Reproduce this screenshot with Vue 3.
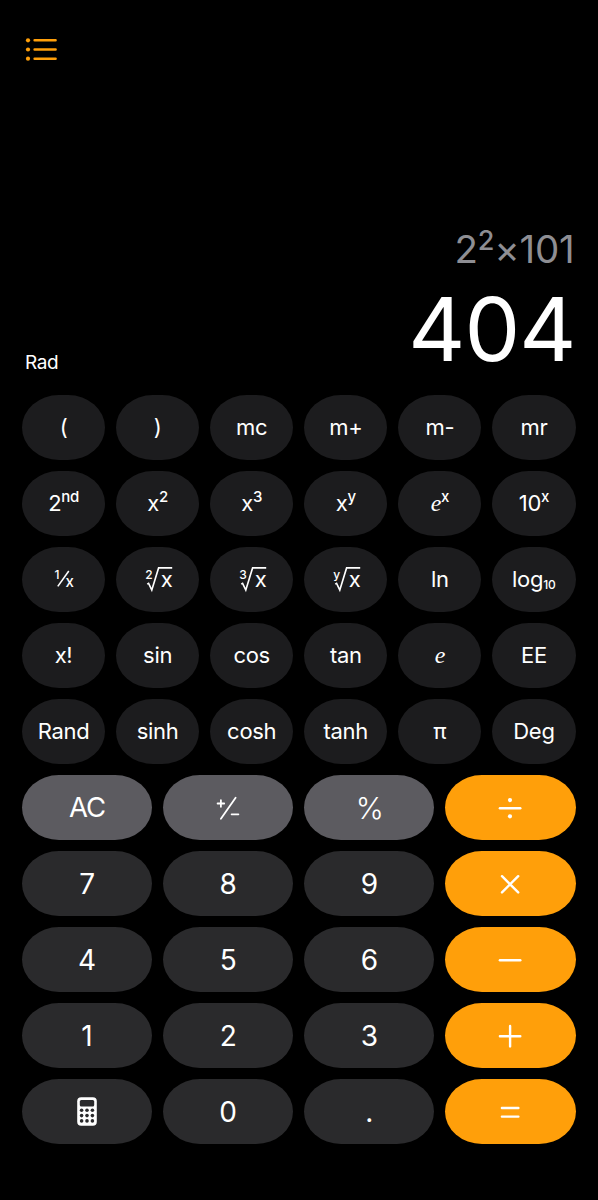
<template>
  <div class="calculator">
    <header class="top-bar">
      <button class="history-button" aria-label="History">
        <svg width="32" height="24" viewBox="0 0 32 24">
          <g fill="#ff9f0a">
            <circle cx="3" cy="3.3" r="2.1" />
            <circle cx="3" cy="12.5" r="2.1" />
            <circle cx="3" cy="21.7" r="2.1" />
          </g>
          <path
            d="M9.6 3.3H30.6M9.6 12.5H30.6M9.6 21.7H30.6"
            stroke="#ff9f0a"
            stroke-width="2.5"
            stroke-linecap="round"
          />
        </svg>
      </button>
    </header>

    <section class="display">
      <div class="expression">2<sup class="exponent">2</sup><span class="times">×</span>101</div>
      <div class="result-row">
        <span class="angle-mode">Rad</span>
        <span class="result">404</span>
      </div>
    </section>

    <section class="keys scientific">
      <button v-for="key in scientificKeys" :key="key.id" class="key key-function">
        <svg v-if="key.root" class="glyph" width="32" height="32" viewBox="0 0 32 32">
          <text class="glyph-index" x="3.2" y="16">{{ key.root }}</text>
          <path class="stroke" d="M5.2 21.1L6.6 20.3L9.8 27.1L16.6 4.9H30.2" />
          <text class="glyph-x" x="18.7" y="23.6">x</text>
        </svg>
        <svg v-else-if="key.reciprocal" class="glyph" width="32" height="32" viewBox="0 0 32 32">
          <text class="glyph-index" x="6.6" y="16">1</text>
          <path class="stroke" d="M9.8 23.4L20.8 8" />
          <text class="glyph-denominator" x="17.4" y="23.8">x</text>
        </svg>
        <span v-else class="label">
          <i v-if="key.euler" class="euler">e</i>{{ key.label
          }}<sup v-if="key.sup" class="sup">{{ key.sup }}</sup
          ><sub v-if="key.sub" class="sub">{{ key.sub }}</sub>
        </span>
      </button>
    </section>

    <section class="keys basic">
      <button v-for="key in basicKeys" :key="key.id" class="key" :class="'key-' + key.type">
        <svg v-if="key.icon === 'calculator'" width="20" height="29" viewBox="0 0 20 29">
          <rect x="0.2" y="0.3" width="19.6" height="28.4" rx="4" fill="#fff" />
          <rect x="2.8" y="3" width="14.4" height="6.4" rx="1.5" fill="#2a2a2c" />
          <g fill="#2a2a2c">
            <template v-for="y in [13.3, 18.6, 23.9]" :key="y">
              <circle v-for="x in [4.6, 10, 15.4]" :key="x" :cx="x" :cy="y" r="1.8" />
            </template>
          </g>
        </svg>
        <svg v-else-if="key.icon" class="glyph" width="32" height="32" viewBox="0 0 32 32">
          <path :class="key.icon === 'sign' ? 'sign' : 'operator'" :d="icons[key.icon]" />
          <template v-if="key.icon === 'divide'">
            <circle cx="16" cy="8.1" r="2.1" fill="#fff" />
            <circle cx="16" cy="24.3" r="2.1" fill="#fff" />
          </template>
        </svg>
        <span v-else class="label" :class="{ percent: key.label === '%' }">{{ key.label }}</span>
      </button>
    </section>
  </div>
</template>

<script setup>
const scientificKeys = [
  { id: 'open', label: '(' },
  { id: 'close', label: ')' },
  { id: 'mc', label: 'mc' },
  { id: 'm+', label: 'm+' },
  { id: 'm-', label: 'm-' },
  { id: 'mr', label: 'mr' },
  { id: '2nd', label: '2', sup: 'nd' },
  { id: 'square', label: 'x', sup: '2' },
  { id: 'cube', label: 'x', sup: '3' },
  { id: 'power', label: 'x', sup: 'y' },
  { id: 'exp', euler: true, sup: 'x' },
  { id: 'exp10', label: '10', sup: 'x' },
  { id: 'reciprocal', reciprocal: true },
  { id: 'root2', root: '2' },
  { id: 'root3', root: '3' },
  { id: 'rooty', root: 'y' },
  { id: 'ln', label: 'ln' },
  { id: 'log10', label: 'log', sub: '10' },
  { id: 'factorial', label: 'x!' },
  { id: 'sin', label: 'sin' },
  { id: 'cos', label: 'cos' },
  { id: 'tan', label: 'tan' },
  { id: 'e', euler: true },
  { id: 'ee', label: 'EE' },
  { id: 'rand', label: 'Rand' },
  { id: 'sinh', label: 'sinh' },
  { id: 'cosh', label: 'cosh' },
  { id: 'tanh', label: 'tanh' },
  { id: 'pi', label: 'π' },
  { id: 'deg', label: 'Deg' },
]

const basicKeys = [
  { id: 'ac', label: 'AC', type: 'utility' },
  { id: 'sign', icon: 'sign', type: 'utility' },
  { id: 'percent', label: '%', type: 'utility' },
  { id: 'divide', icon: 'divide', type: 'operator' },
  { id: '7', label: '7', type: 'digit' },
  { id: '8', label: '8', type: 'digit' },
  { id: '9', label: '9', type: 'digit' },
  { id: 'multiply', icon: 'multiply', type: 'operator' },
  { id: '4', label: '4', type: 'digit' },
  { id: '5', label: '5', type: 'digit' },
  { id: '6', label: '6', type: 'digit' },
  { id: 'minus', icon: 'minus', type: 'operator' },
  { id: '1', label: '1', type: 'digit' },
  { id: '2', label: '2', type: 'digit' },
  { id: '3', label: '3', type: 'digit' },
  { id: 'plus', icon: 'plus', type: 'operator' },
  { id: 'mode', icon: 'calculator', type: 'digit' },
  { id: '0', label: '0', type: 'digit' },
  { id: 'dot', label: '.', type: 'digit' },
  { id: 'equals', icon: 'equals', type: 'operator' },
]

const icons = {
  sign: 'M5.6 11.5H12.2M8.9 8.2V14.8M8.9 26.7L23.6 5.8M19.6 22.3H26.4',
  divide: 'M5.9 16.2H26.3',
  multiply: 'M8 8.2L24.2 24.4M24.2 8.2L8 24.4',
  minus: 'M5.9 16.2H26.3',
  plus: 'M5.9 16.2H26.3M16.1 6V26.4',
  equals: 'M7.9 12H24.4M7.9 20.6H24.4',
}
</script>

<style>
body {
  background: #000;
}
</style>

<style scoped>
.calculator {
  box-sizing: border-box;
  width: 598px;
  height: 1200px;
  padding: 37px 22.5px 0 22px;
  display: flex;
  flex-direction: column;
  background: #000;
  color: #fff;
  font-family: Inter, 'Liberation Sans', sans-serif;
}

button {
  border: none;
  padding: 0;
  margin: 0;
  background: none;
  color: inherit;
  font: inherit;
  cursor: pointer;
}

.top-bar {
  height: 189px;
  padding-left: 3px;
}

.history-button {
  display: block;
  height: 24px;
}

.history-button svg {
  display: block;
}

.display {
  height: 168.6px;
}

.expression {
  height: 48px;
  padding-right: 1px;
  text-align: right;
  font-size: 38.5px;
  line-height: 47px;
  letter-spacing: -0.2px;
  color: #8e8e93;
}

.exponent {
  font-size: 27px;
  font-weight: 500;
  line-height: 0;
  vertical-align: 13px;
}

.result-row {
  display: flex;
  align-items: flex-end;
  justify-content: space-between;
  padding-left: 3px;
}

.angle-mode {
  font-size: 19px;
  line-height: 23px;
  letter-spacing: -0.4px;
  padding-bottom: 10px;
}

.result {
  font-size: 88.5px;
  line-height: 110px;
  letter-spacing: -1px;
}

.keys {
  display: grid;
  grid-auto-rows: 65px;
  gap: 11.1px 11px;
}

.scientific {
  grid-template-columns: repeat(6, 1fr);
  margin-bottom: 11.1px;
}

.basic {
  grid-template-columns: repeat(4, 1fr);
}

.key {
  display: flex;
  align-items: center;
  justify-content: center;
  border-radius: 37px / 32.5px;
}

.key-function {
  background: #1c1c1e;
  font-size: 22px;
  letter-spacing: -0.3px;
}

.key-utility {
  background: #5c5b60;
  font-size: 27.5px;
  letter-spacing: -0.9px;
}

.key-digit {
  background: #2a2a2c;
  font-size: 28px;
}

.key-operator {
  background: #ff9f0a;
}

.label {
  line-height: 1;
  white-space: nowrap;
}

.sup,
.sub {
  font-size: 15px;
  font-weight: 500;
  line-height: 0;
}

.sup {
  vertical-align: 9px;
}

.sub {
  font-size: 12px;
  vertical-align: -2px;
  letter-spacing: 0;
}

.euler {
  font-family: 'Liberation Serif', serif;
  font-size: 24px;
}

.percent {
  font-size: 30px;
  font-weight: 300;
}

.glyph {
  display: block;
  fill: #fff;
}

.glyph-index {
  font-size: 12px;
  font-weight: 500;
}

.glyph-x {
  font-size: 22px;
}

.glyph-denominator {
  font-size: 15px;
  font-weight: 500;
}

.stroke,
.sign,
.operator {
  fill: none;
  stroke: #fff;
  stroke-width: 1.6;
}

.sign {
  stroke-width: 1.8;
  stroke-linecap: round;
}

.operator {
  stroke-width: 2.4;
  stroke-linecap: round;
}
</style>
